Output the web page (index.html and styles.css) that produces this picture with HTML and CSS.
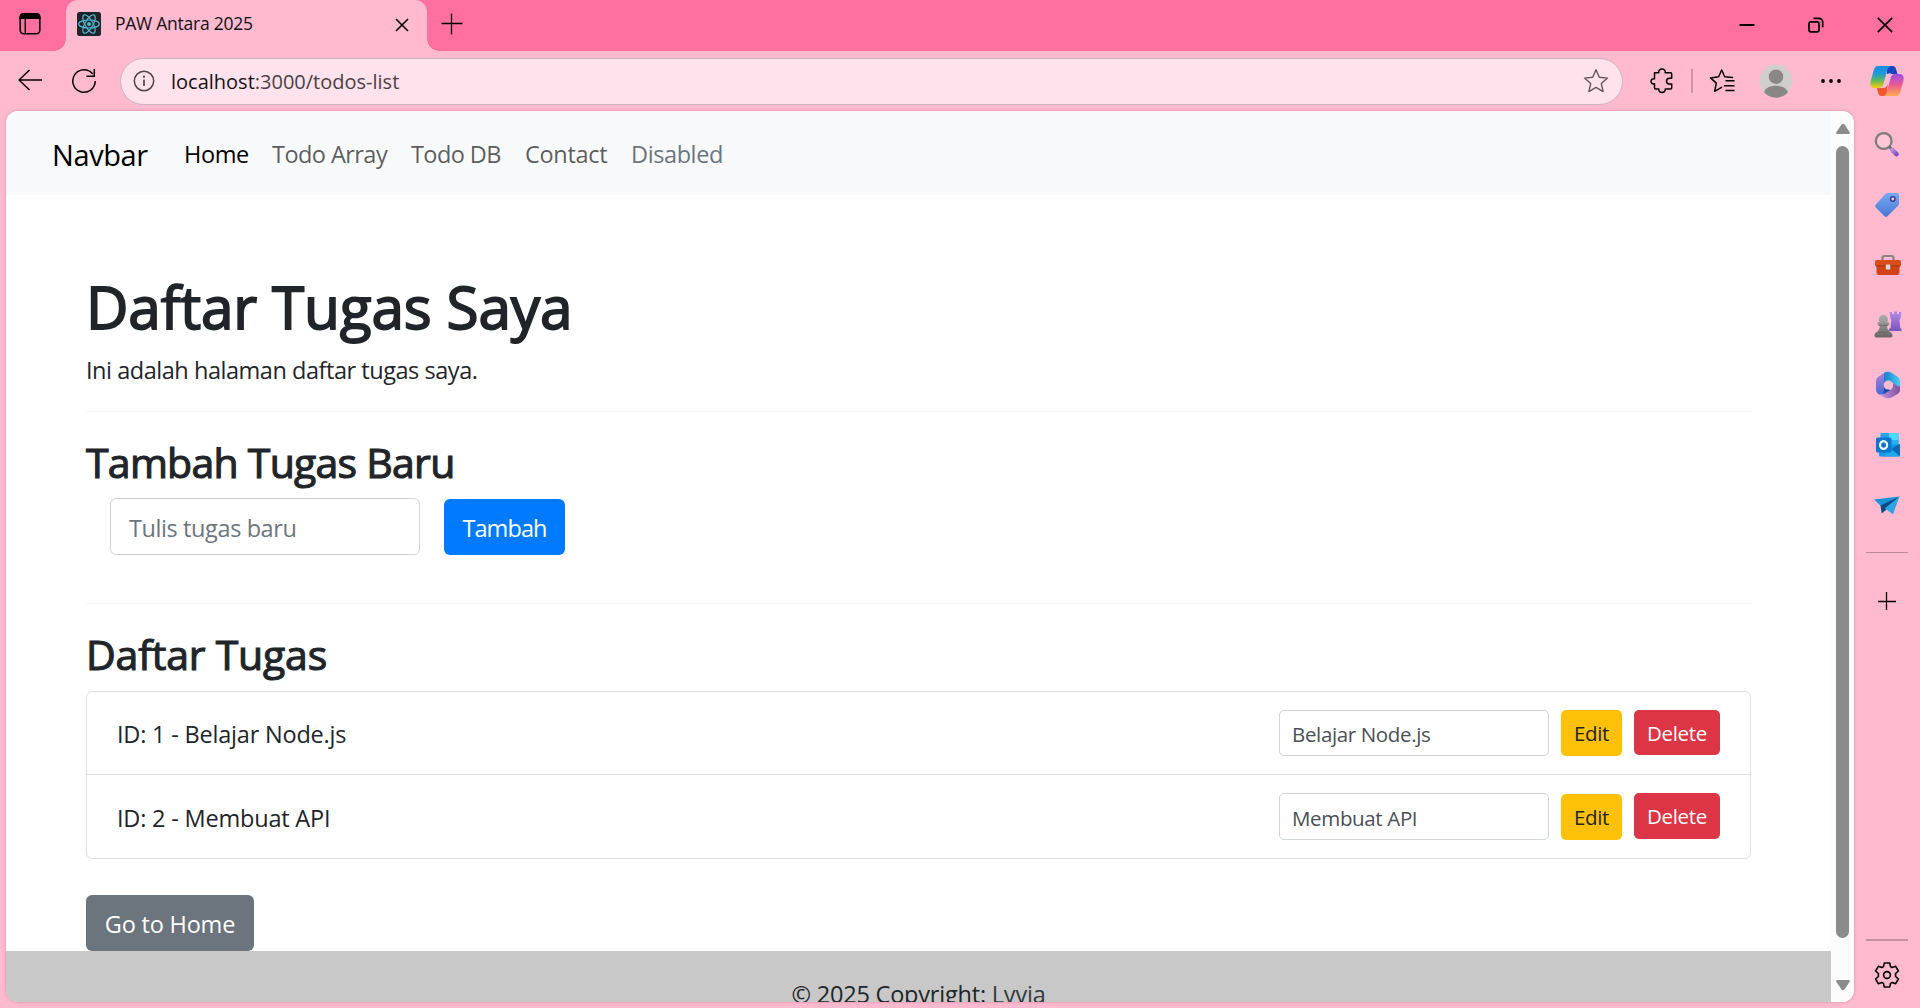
FILE: index.html
```html
<!DOCTYPE html>
<html lang="id">
<head>
<meta charset="utf-8">
<title>PAW Antara 2025</title>
<link rel="stylesheet" href="styles.css">
</head>
<body>
<header class="tabstrip">
  <svg class="tab-actions" width="24" height="24" viewBox="0 0 24 24"><rect x="2.2" y="2.2" width="19.6" height="19.6" rx="3.5" fill="none" stroke="#000" stroke-width="1.6"/><path d="M1.5 7V5a4 4 0 0 1 4-4h13a4 4 0 0 1 4 4v2z"/><path d="M7.3 7v15" stroke="#000" stroke-width="1.4"/></svg>
  <div class="tab">
    <svg class="favicon" width="24" height="24" viewBox="0 0 24 24"><rect width="24" height="24" rx="2.5" fill="#20232a"/><g fill="none" stroke="#4fb8d0" stroke-width="1.2"><ellipse cx="12" cy="12" rx="10.3" ry="4"/><ellipse cx="12" cy="12" rx="10.3" ry="4" transform="rotate(60 12 12)"/><ellipse cx="12" cy="12" rx="10.3" ry="4" transform="rotate(120 12 12)"/></g><circle cx="12" cy="12" r="2" fill="#4fb8d0"/></svg>
    <span class="tab-title">PAW Antara 2025</span>
    <svg class="tab-close" width="14" height="14" viewBox="0 0 14 14"><path d="M1 1l12 12M13 1L1 13" stroke="#000" stroke-width="1.6"/></svg>
  </div>
  <svg class="new-tab" width="22" height="22" viewBox="0 0 22 22"><path d="M.5 10.5h21M10.5.5v21" stroke="#000" stroke-width="1.3"/></svg>
  <div class="window-buttons">
    <svg width="16" height="16" viewBox="0 0 16 16"><path d="M.5 8h15" stroke="#000" stroke-width="2"/></svg>
    <svg width="16" height="16" viewBox="0 0 16 16" fill="none" stroke="#000" stroke-width="1.7"><rect x="1" y="4.8" width="10" height="10" rx="2"/><path d="M5.5 1.3h5.2a4 4 0 0 1 4 4v5"/></svg>
    <svg width="16" height="16" viewBox="0 0 16 16"><path d="M.8.8l14.4 14.4M15.2.8L.8 15.2" stroke="#000" stroke-width="1.7"/></svg>
  </div>
</header>

<nav class="toolbar">
  <svg class="back" width="24" height="22" viewBox="0 0 24 22"><path d="M11.5 1L1 11l10.500 10M1 11h23" fill="none" stroke="#000" stroke-width="1.5"/></svg>
  <svg class="reload" width="26" height="26" viewBox="0 0 26 26"><path d="M21.800 6.100A11.200 11.200 0 1 0 24.200 13M23.300 1v7.200h-8" fill="none" stroke="#000" stroke-width="1.5"/></svg>
  <div class="address">
    <svg width="22" height="22" viewBox="0 0 22 22"><circle cx="11" cy="11" r="9.700" fill="none" stroke="#51474b" stroke-width="1.500"/><path d="M11 9.500v6.500" stroke="#51474b" stroke-width="1.700"/><circle cx="11" cy="6.700" r="1.100" fill="#51474b"/></svg>
    <span class="url"><span class="host">localhost</span>:3000/todos-list</span>
    <svg class="star" width="26" height="26" viewBox="0 0 26 26"><path d="M13 1.800l3.300 7.500 8.200.800-6.200 5.500 1.800 8-7.100-4.200-7.100 4.200 1.800-8L1.500 10.100l8.200-.800z" fill="none" stroke="#62575c" stroke-width="1.400" stroke-linejoin="round"/></svg>
  </div>
  <svg class="puzzle" width="24" height="26" viewBox="0 0 24 26"><path d="M4.500 4.700h4.300C8.300 2.300 10 1 12 1s3.700 1.300 3.200 3.700h5.300q1.200 0 1.200 1.200v4.400h-2c-2 0-3.200 1.200-3.200 2.900s1.200 2.900 3.200 2.900h2v3.700q0 1.200-1.200 1.200h-5.300c.3 2.300-1.300 3.500-3.200 3.500S8.500 23.300 8.800 21H5.700q-1.200 0-1.200-1.200v-4C2.200 16.200 1 15 1 13.300s1.200-2.800 3.500-2.500z" fill="none" stroke="#000" stroke-width="1.500" stroke-linejoin="round"/></svg>
  <span class="tool-divider"></span>
  <svg class="favorites" width="26" height="26" viewBox="0 0 26 26" fill="none" stroke="#000" stroke-width="1.500" stroke-linejoin="round" stroke-linecap="round"><path d="M23.500 9.500l-7.800-.8L12.700 2 9.600 8.700l-8.100 1.200 5.800 5.200-1.700 8.200 7-4"/><path d="M17 12.800h8M15.500 17.700H25M17 22.500h8"/></svg>
  <svg class="avatar" width="34" height="34" viewBox="0 0 34 34"><circle cx="17" cy="17" r="16.600" fill="#d1cfcd"/><circle cx="17" cy="12.700" r="7.300" fill="#8a8886"/><path d="M5 28.300C6.500 23.800 11 21.800 17 21.800s10.500 2 12 6.500A16 16 0 0 1 5 28.300z" fill="#8a8886"/></svg>
  <svg class="more" width="22" height="6" viewBox="0 0 22 6"><circle cx="3" cy="3" r="1.900"/><circle cx="11" cy="3" r="1.900"/><circle cx="19" cy="3" r="1.900"/></svg>
  <svg class="copilot" width="34" height="32" viewBox="0 0 34 32">
    <defs>
      <linearGradient id="cpA" x1="0" y1="0" x2="0" y2="1"><stop offset="0" stop-color="#1b8de8"/><stop offset=".35" stop-color="#1f9bd8"/><stop offset=".65" stop-color="#5fb75c"/><stop offset="1" stop-color="#f3d00e"/></linearGradient>
      <linearGradient id="cpB" x1="0" y1="0" x2="0" y2="1"><stop offset="0" stop-color="#a04ce8"/><stop offset=".5" stop-color="#ec5a90"/><stop offset="1" stop-color="#ffab4f"/></linearGradient>
    </defs>
    <path d="M17 1h5.500c2 0 3 1 3.500 3l1.500 5H22c-3 0-4 1-5 4z" fill="#1446c0"/>
    <path d="M17 31h-5.500c-2 0-2.800-1-3.300-3L7 23h6c2.500 0 3.500-1 4.500-4z" fill="#f2542d"/>
    <path d="M8.500 1h12c-2 1-2.800 2.500-3.500 5l-3.500 12.500c-1 3.300-2 4.500-5 4.500H5c-4 0-5.500-2.500-4.300-7L3.500 6C4.400 2.500 5.500 1 8.500 1z" fill="url(#cpA)"/>
    <path d="M25.500 31h-12c2-1 2.800-2.500 3.500-5l3.500-12.500c1-3.300 2-4.500 5-4.500H29c4 0 5.500 2.500 4.300 7L30.500 26c-.9 3.500-2 5-5 5z" fill="url(#cpB)"/>
    <path d="M16.800 9.300q.9-1 4.600-1-1.700 1.600-2.500 4.500l-2.200 7.200q-1 3-4.600 3 1.200-.8 2-3.500z" fill="#ffbad0"/>
  </svg>
</nav>

<div class="workspace">
  <div class="viewport">
    <div class="page">
      <nav class="navbar">
        <a class="brand">Navbar</a>
        <a class="nav-link active">Home</a>
        <a class="nav-link array">Todo Array</a>
        <a class="nav-link db">Todo DB</a>
        <a class="nav-link contact">Contact</a>
        <a class="nav-link disabled">Disabled</a>
      </nav>
      <main class="container">
        <h1>Daftar Tugas Saya</h1>
        <p class="lead">Ini adalah halaman daftar tugas saya.</p>
        <hr>
        <h3 class="add-title">Tambah Tugas Baru</h3>
        <div class="add-form">
          <div class="field">Tulis tugas baru</div>
          <button class="btn primary">Tambah</button>
        </div>
        <hr>
        <h3 class="list-title">Daftar Tugas</h3>
        <ul class="list">
          <li>
            <span class="task">ID: 1 - Belajar Node.js</span>
            <div class="field small">Belajar Node.js</div>
            <button class="btn small edit">Edit</button>
            <button class="btn small delete">Delete</button>
          </li>
          <li>
            <span class="task">ID: 2 - Membuat API</span>
            <div class="field small">Membuat API</div>
            <button class="btn small edit">Edit</button>
            <button class="btn small delete">Delete</button>
          </li>
        </ul>
        <button class="btn home">Go to Home</button>
      </main>
      <footer>© 2025 Copyright: <a>Lyvia</a></footer>
    </div>
    <div class="scrollbar">
      <svg width="16" height="12" viewBox="0 0 16 12"><path d="M6.500 1.500q1.500-1.500 3 0l5 7.500q1 2-1 2h-11q-2 0-1-2z" fill="#8b8b8b"/></svg>
      <div class="thumb"></div>
      <svg width="16" height="12" viewBox="0 0 16 12"><path d="M6.500 10.500q1.500 1.500 3 0l5-7.500q1-2-1-2h-11q-2 0-1 2z" fill="#8b8b8b"/></svg>
    </div>
  </div>

  <aside class="sidebar">
    <div class="app"><svg width="26" height="26" viewBox="0 0 26 26"><defs><linearGradient id="hd" x1="0" y1="0" x2="1" y2="1"><stop offset="0" stop-color="#b48ce8"/><stop offset="1" stop-color="#7e55c0"/></linearGradient></defs><circle cx="9.700" cy="9" r="7.900" fill="#ffc6d8" stroke="#7f7d7d" stroke-width="2.300"/><path d="M15 14.500l3 3" stroke="#6b6b6b" stroke-width="2.500"/><path d="M18.300 18l4.200 4.200" stroke="url(#hd)" stroke-width="4.600" stroke-linecap="round"/></svg></div>
    <div class="app"><svg width="26" height="26" viewBox="0 0 26 26"><defs><linearGradient id="tg" x1="0" y1="0" x2="0" y2="1"><stop offset="0" stop-color="#76a9f4"/><stop offset="1" stop-color="#4877d4"/></linearGradient></defs><path d="M13.500 1H23q2 0 2 2v8.500q0 1.300-1 2.300L13.500 24.200q-1.500 1.300-3 0l-8.700-8.700q-1.500-1.500 0-3L11.500 2q.8-1 2-1z" fill="url(#tg)"/><circle cx="18.800" cy="7" r="2.200" fill="#fbc4d6" stroke="#383e93" stroke-width="1.500"/></svg></div>
    <div class="app shifted"><svg width="28" height="22" viewBox="0 0 28 22"><path d="M8.500 7V4q0-2 2-2h7q2 0 2 2v3" fill="none" stroke="#858585" stroke-width="2.200"/><rect x="2.500" y="10" width="23" height="11" rx="2" fill="#d24317"/><rect x="1" y="6" width="26" height="6.500" rx="1.500" fill="#da4c1b"/><path d="M2 12h24" stroke="#a93411" stroke-width="1.200"/><rect x="11.800" y="10.500" width="4.500" height="5" rx="1" fill="#d4dad8"/></svg></div>
    <div class="app shifted"><svg width="28" height="28" viewBox="0 0 28 28"><defs><linearGradient id="rk" x1="0" y1="0" x2="0" y2="1"><stop offset="0" stop-color="#b48be9"/><stop offset="1" stop-color="#7856bd"/></linearGradient><linearGradient id="pw" x1="0" y1="0" x2="0" y2="1"><stop offset="0" stop-color="#b0b0b0"/><stop offset="1" stop-color="#666"/></linearGradient></defs><path d="M15.500 1h2.500v2h2V.5h3V3h2V1h2.500l-1.200 7-.8 1 .8 8 1.200 1v2H15v-2l1.500-1 .8-8-.8-1z" fill="url(#rk)"/><path d="M9.300 3.800a4.600 4.600 0 0 1 3.800 7.200q2.400.2 2.400 1.900t-2.600 1.900q.2 3.700 2.700 6 2.900.8 2.900 4 0 1.700-1.700 1.700H2.200q-1.700 0-1.700-1.700 0-3.200 2.900-4 2.300-2.300 2.500-6-2.600-.2-2.600-1.900T5.600 11a4.600 4.600 0 0 1 3.700-7.200z" fill="url(#pw)"/><path d="M4.500 21.300h9.500M5 14.300h9" stroke="#666" stroke-width="1"/></svg></div>
    <div class="app shifted"><svg width="26" height="28" viewBox="0 0 26 28"><defs><linearGradient id="m1" x1="0" y1="0" x2="1" y2="0"><stop offset="0" stop-color="#167fc4"/><stop offset="1" stop-color="#47cff8"/></linearGradient><linearGradient id="m2" x1="0" y1="0" x2="0" y2="1"><stop offset="0" stop-color="#ad80de"/><stop offset="1" stop-color="#4668d8"/></linearGradient><linearGradient id="m3" x1="0" y1="0" x2="1" y2="0"><stop offset="0" stop-color="#c69be8"/><stop offset="1" stop-color="#7d509a"/></linearGradient></defs><path d="M13 1q-2 0-4 1L3 6Q1 7.500 1 10v9q0 2.500 2 3.700l2 1.200q3 .6 4-2.400V11q0-2 2-3.300L16 5z" fill="url(#m2)"/><path d="M9 2q4-2.500 8 0l6 4q2 1.500 2 4v5q0 1.500-1.500.8L16 11q-2.500-1.300-4.500 0L9 12.500V2z" fill="url(#m1)"/><path d="M25 14v5q0 2.500-2 3.700l-6 3.500q-4 2.300-8 0l-5-3q3 .5 5.500-1l6.500-3.700q2-1.500 2-4V12l5.500 3.500q1.500.5 1.500-1.500z" fill="url(#m3)"/><path d="M9 16v4q0 3-3 4l4-1.500 5.500-3.500z" fill="#1d4fa8"/><circle cx="13.300" cy="14" r="4.600" fill="#ffbad0"/></svg></div>
    <div class="app shifted"><svg width="26" height="26" viewBox="0 0 26 26"><path d="M6.500 1H22q1.500 0 1.500 1.500V15h-18V2.500Q5.500 1 6.500 1z" fill="#27a4e9"/><path d="M14 1h8q1.500 0 1.500 1.500V8H14z" fill="#4fd8fd"/><path d="M14 8h9.500v6H14z" fill="#28b1ef"/><path d="M4 14l21-2v11q0 1.500-1.500 1.500h-18Q4 24.500 4 23z" fill="#1795e0"/><path d="M25 12v12l-9-7z" fill="#0f68b2"/><path d="M16 17l9 7.500H8z" fill="#23a8eb"/><rect x="1" y="5.500" width="15.500" height="15" rx="1.500" fill="#0876cf"/><ellipse cx="8.600" cy="13" rx="3.500" ry="3.900" fill="none" stroke="#fff" stroke-width="2.200"/></svg></div>
    <div class="app"><svg width="28" height="22" viewBox="0 0 28 22"><path d="M1 5.500L26.500 2.500 8.500 12.500z" fill="#1c92da"/><path d="M26.500 2.500L7.500 11.500l1.200 8L13 16z" fill="#0a4b86"/><path d="M26.500 2.500L12 14.200l8 6.300z" fill="#2ba5e8"/></svg></div>
    <span class="rule"></span>
    <svg class="add" width="20" height="20" viewBox="0 0 20 20"><path d="M1 10.500h18M9.500 1v18" stroke="#000" stroke-width="1.300"/></svg>
    <span class="rule bottom"></span>
    <svg class="gear" width="26" height="26" viewBox="0 0 26 26" fill="none" stroke="#000" stroke-width="1.600" stroke-linejoin="round"><path d="M10.300 1h5.400l.8 3.600 1.600.9 3.600-1.200 2.700 4.700-2.800 2.500v3l2.800 2.500-2.700 4.700-3.600-1.200-1.600.9-.8 3.600h-5.400l-.8-3.600-1.600-.9-3.600 1.200L1.600 17l2.800-2.500v-3L1.600 9l2.700-4.700 3.600 1.200 1.600-.9z"/><circle cx="13" cy="13" r="3.400"/></svg>
  </aside>
</div>
</body>
</html>
```
FILE: styles.css
```css
* { box-sizing: border-box; }
body {
  margin: 0;
  width: 1920px;
  height: 1008px;
  overflow: hidden;
  display: flex;
  flex-direction: column;
  background: #ffbad0;
  color: #212529;
  font-family: "Open Sans", "Noto Sans", sans-serif;
  font-size: 23.500px;
  white-space: nowrap;
}
svg { display: block; flex: none; }

/* tab strip */
.tabstrip { height: 51px; flex: none; display: flex; background: #ff70a0; }
.tab-actions { margin: 12px 24px 0 18px; }
.tab {
  width: 361px;
  display: flex;
  align-items: flex-start;
  background: #ffbad0;
  border-radius: 12px 12px 0 0;
  position: relative;
}
.tab::before, .tab::after {
  content: "";
  position: absolute;
  bottom: 0;
  width: 12px;
  height: 12px;
}
.tab::before { left: -12px; background: radial-gradient(circle at 0 0, #ff70a0 11.500px, #ffbad0 12px); }
.tab::after { right: -12px; background: radial-gradient(circle at 100% 0, #ff70a0 11.500px, #ffbad0 12px); }
.favicon { margin: 12px 0 0 11px; }
.tab-title { margin: 12px 0 0 14px; width: 280px; font-size: 17.500px; letter-spacing: -.25px; line-height: 23px; color: #111; }
.tab-close { margin: 18px 17px 0 0; }
.new-tab { margin: 13px 0 0 14px; }
.window-buttons { display: flex; gap: 53px; margin: 17px 27px 0 auto; }

/* toolbar */
.toolbar { height: 60px; flex: none; display: flex; align-items: center; }
.back { margin-left: 18px; margin-top: -2px; }
.reload { margin-left: 29px; }
.address {
  width: 1503px;
  height: 47px;
  margin-left: 23px;
  padding: 0 13px 0 12px;
  display: flex;
  align-items: center;
  border: 1px solid #cfb4bf;
  border-radius: 24px;
  background: #ffe2eb;
}
.url { margin-left: 16px; padding-top: 2px; line-height: 30px; font-size: 20px; color: #4a4145; }
.host { color: #141214; }
.star { margin-left: auto; }
.puzzle { margin-left: 27px; }
.tool-divider { width: 2px; height: 24px; margin-left: 17px; background: #cc94a5; }
.favorites { margin-left: 16px; }
.avatar { margin-left: 24px; }
.more { margin-left: 27px; }
.copilot { margin-left: 28px; }

/* browser frame */
.workspace { height: 897px; display: flex; }
.viewport {
  width: 1848px;
  height: 891px;
  margin-left: 6px;
  display: flex;
  overflow: hidden;
  border-radius: 12px;
  background: #fff;
  box-shadow: 0 0 3px rgba(120, 40, 70, .35);
}
.page { width: 1825px; height: 891px; overflow: hidden; }
.scrollbar {
  width: 23px;
  padding: 12px 0 11px;
  display: flex;
  flex-direction: column;
  align-items: center;
  background: #fcfcfc;
}
.thumb { width: 13px; height: 792px; margin: 11px 0 auto; border-radius: 7px; background: #8b8b8b; }

/* site navigation */
.navbar { height: 84px; padding: 2px 0 0 46px; display: flex; align-items: center; background: #f8f9fa; letter-spacing: -.4px; }
.navbar a { color: rgba(0, 0, 0, .65); }
.navbar .brand { width: 132px; font-size: 29px; color: #000; }
.navbar .active { width: 88px; color: #000; }
.array { width: 139px; letter-spacing: -.55px; }
.db { width: 114px; letter-spacing: -.6px; }
.contact { width: 106px; letter-spacing: -.3px; }
.navbar .disabled { color: #6c757d; }

/* content */
.container { padding: 0 80px; display: flex; flex-direction: column; }
h1, h3, p, ul, hr { margin: 0; }
h1, h3 { font-weight: 500; }
h1 { margin-top: 75px; font-size: 58.500px; line-height: 72px; letter-spacing: -.15px; -webkit-text-stroke: 1.8px #212529; }
.lead { margin-top: 10px; line-height: 36px; letter-spacing: -.46px; }
hr { border: 0; height: 1px; background: #f4f4f4; }
.lead + hr { margin-top: 23px; }
h3 { font-size: 41px; line-height: 50px; -webkit-text-stroke: 1.1px #212529; }
.add-title { margin-top: 25px; letter-spacing: -.74px; }
.add-form { display: flex; margin: 11px 0 48px 24px; gap: 24px; align-items: flex-end; }
.field {
  width: 310px;
  height: 57px;
  padding: 2px 18px 0;
  display: flex;
  align-items: center;
  border: 1px solid #ced4da;
  border-radius: 6px;
  color: #6c757d;
  letter-spacing: -.4px;
}
.btn {
  height: 56px;
  padding: 2px 0 0;
  border: 0;
  border-radius: 6px;
  font: inherit;
  color: #fff;
}
.primary { width: 121px; background: #007bff; letter-spacing: -.9px; }
.list-title { margin: 25px 0 12px; letter-spacing: -.2px; }
.list { padding: 0; list-style: none; border: 1px solid #dfdfdf; border-radius: 6px; }
.list li { height: 82px; padding: 0 30px; display: flex; align-items: center; }
.list li + li { height: 84px; border-top: 1px solid #dfdfdf; }
.task { margin-right: auto; padding-top: 2px; letter-spacing: -.2px; }
.btn.small { height: 46px; padding: 0; border-radius: 5px; font-size: 20.500px; letter-spacing: -.3px; }
.field.small { width: 270px; height: 46px; padding: 2px 12px 0; border-radius: 5px; font-size: 20.500px; letter-spacing: -.35px; color: #495057; }
.list li + li .field { height: 47px; }
.btn.edit { width: 61px; margin-left: 12px; background: #ffc107; color: #212529; }
.btn.delete { width: 86px; height: 45px; margin: 0 0 1px 12px; background: #dc3545; }
.list li + li .delete { height: 46px; }
.home { width: 168px; margin-top: 36px; background: #6c757d; letter-spacing: -.2px; }
footer { height: 100px; padding-top: 25px; text-align: center; line-height: 36px; letter-spacing: -.2px; background: #c8c8c8; }
footer a { color: #343a40; }

/* sidebar */
.sidebar { width: 66px; padding-top: 4px; display: flex; flex-direction: column; align-items: center; }
.app { height: 60px; flex: none; display: flex; align-items: center; justify-content: center; }
.app.shifted { padding-left: 2px; }
.rule { width: 42px; height: 1px; margin-top: 17px; background: #bd8799; }
.add { margin-top: 38px; }
.rule.bottom { height: 2px; margin-top: auto; background: #c68ea2; }
.gear { margin: 21px 0 20px; }
```
